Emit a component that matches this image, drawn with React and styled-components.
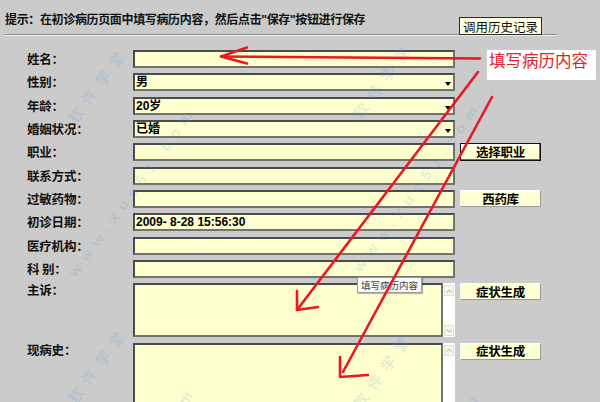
import React from "react";
import styled, { createGlobalStyle, css } from "styled-components";

const Global = createGlobalStyle`
  html, body { margin: 0; padding: 0; background: #cbcbcb; }
  body { font-family: "Liberation Sans", "Noto Sans CJK SC", sans-serif; }
`;

const Page = styled.div`
  position: relative;
  width: 600px;
  height: 402px;
  overflow: hidden;
  background: #cbcbcb;
  color: #000;
  font-family: "Liberation Sans", "Noto Sans CJK SC", sans-serif;
`;

const Header = styled.div`
  display: flex;
  align-items: flex-end;
  justify-content: space-between;
  height: 34px;
  margin: 0 43px 0 5px;
  border-bottom: 1px solid #8e8e8e;
  box-shadow: 0 1px 0 #ededed;
`;

const Hint = styled.div`
  font-weight: 700;
  font-size: 12px;
  line-height: 16px;
  letter-spacing: -0.35px;
  padding-bottom: 6px;
  color: #111;
`;

const HistoryButton = styled.button`
  box-sizing: border-box;
  width: 83px;
  height: 18px;
  margin: 0 15px -1px 0;
  padding: 0;
  background: #ffffe0;
  border: 1px solid #2a2a2a;
  font: 400 12.5px/15px "Noto Sans CJK SC", sans-serif;
  color: #111;
`;

const Form = styled.div`
  display: flex;
  flex-direction: column;
  gap: 5.33px;
  margin: 15px 0 0 27px;
`;

const Row = styled.div`
  display: grid;
  grid-template-columns: 101px 322px 81px;
  column-gap: 5px;
  height: ${(p) => p.$h}px;
  align-items: ${(p) => (p.$tall ? "start" : "center")};
`;

const Label = styled.div`
  font: 700 12.5px/14px "Noto Sans CJK SC", sans-serif;
  letter-spacing: -0.2px;
  color: #111;
  white-space: pre;
  padding-top: ${(p) => (p.$tall ? "0px" : "0")};
`;

const fieldBorder = css`
  box-sizing: border-box;
  background: #fffecf;
  border: 2px solid;
  border-color: #4c4c4c #727272 #727272 #4c4c4c;
`;

const Field = styled.div`
  ${fieldBorder};
  height: 18px;
  display: flex;
  align-items: center;
  padding-left: 1px;
`;

const Value = styled.span`
  flex: 1;
  font: 700 12px/14px "Liberation Sans", "Noto Sans CJK SC", sans-serif;
  color: #000;
  white-space: pre;
`;

const DropArrow = styled.span`
  align-self: stretch;
  width: 11px;
  display: flex;
  align-items: flex-end;
  justify-content: center;
  padding-bottom: 3px;
  box-sizing: border-box;
  border-left: 1px solid #fffff2;
  &::after {
    content: "";
    border-left: 3px solid transparent;
    border-right: 3px solid transparent;
    border-top: 4px solid #000;
  }
`;

const ActionButton = styled.button`
  box-sizing: border-box;
  align-self: ${(p) => (p.$top ? "start" : "center")};
  width: 81px;
  height: ${(p) => (p.$focused ? 18 : 17)}px;
  padding: 0;
  background: #ffffd4;
  font: 700 12.5px/14px "Noto Sans CJK SC", sans-serif;
  letter-spacing: -0.3px;
  color: #000;
  border: 1px solid;
  border-color: #fffff4 #9c9c9c #9c9c9c #fffff4;
  ${(p) =>
    p.$focused &&
    css`
      border: 1px solid #111;
      box-shadow: inset -1px -1px 0 #6a6a6a, inset 1px 1px 0 #ffffff;
    `}
`;

const TextBox = styled.div`
  display: flex;
  height: 100%;
`;

const Area = styled.div`
  ${fieldBorder};
  flex: 1;
`;

const ScrollStrip = styled.div`
  width: 12px;
  background: #ffffff;
  display: flex;
  flex-direction: column;
  justify-content: space-between;
  align-items: center;
  padding: 2px 0 1px;
  box-sizing: border-box;
`;

const ScrollBtn = styled.div`
  box-sizing: border-box;
  width: 10px;
  height: 11px;
  background: #f6f6ea;
  border: 1px solid #e2e2d2;
  display: flex;
  align-items: center;
  justify-content: center;
`;

const Overlay = styled.svg`
  position: absolute;
  left: 0;
  top: 0;
  pointer-events: none;
`;

const Note = styled.div`
  position: absolute;
  left: 487px;
  top: 50px;
  width: 109px;
  height: 30px;
  background: #ffffff;
  box-sizing: border-box;
  padding-left: 2px;
  font: 400 16.5px/20px "Noto Sans CJK SC", sans-serif;
  color: #e2222c;
  white-space: nowrap;
`;

const Tooltip = styled.div`
  position: absolute;
  left: 357px;
  top: 277px;
  width: 65px;
  height: 16px;
  box-sizing: border-box;
  background: #fafafa;
  border: 1px solid #9a9a9a;
  box-shadow: 1px 1px 1px rgba(0, 0, 0, 0.25);
  font: 400 9.5px/14px "Noto Sans CJK SC", sans-serif;
  color: #444;
  text-align: center;
  white-space: nowrap;
`;

const Watermark = styled.div`
  position: absolute;
  left: 0;
  top: 0;
  width: 600px;
  height: 402px;
  pointer-events: none;
`;

const MarkText = styled.span`
  position: absolute;
  transform-origin: 0 50%;
  transform: rotate(-54deg);
  white-space: nowrap;
  color: rgba(70, 140, 215, 0.16);
  font: 700 ${(p) => p.$size}px/20px "Liberation Sans", "Noto Sans CJK SC", sans-serif;
  letter-spacing: ${(p) => p.$spacing}px;
`;

const rows = [
  { label: "姓名：" },
  { label: "性别：", select: true, value: "男" },
  { label: "年龄：", select: true, value: "20岁" },
  { label: "婚姻状况：", select: true, value: "已婚" },
  { label: "职业：", button: "选择职业", focused: true },
  { label: "联系方式：" },
  { label: "过敏药物：", button: "西药库" },
  { label: "初诊日期：", value: "2009- 8-28 15:56:30" },
  { label: "医疗机构：" },
  { label: "科 别：" },
];

const Chevron = ({ up }) => (
  <svg width="6" height="4" viewBox="0 0 6 4">
    <polyline
      points={up ? "0.5,3.5 3,1 5.5,3.5" : "0.5,0.5 3,3 5.5,0.5"}
      fill="none"
      stroke="#c9c9b2"
      strokeWidth="1.2"
    />
  </svg>
);

const tiles = [
  [0, 0],
  [285, -5],
  [0, 280],
  [285, 285],
];

export default function App() {
  return (
    <Page>
      <Global />
      <Header>
        <Hint>提示：在初诊病历页面中填写病历内容，然后点击"保存"按钮进行保存</Hint>
        <HistoryButton>调用历史记录</HistoryButton>
      </Header>
      <Form>
        {rows.map((r) => (
          <Row key={r.label} $h={18}>
            <Label>{r.label}</Label>
            <Field>
              <Value>{r.value || ""}</Value>
              {r.select && <DropArrow />}
            </Field>
            {r.button ? (
              <ActionButton $focused={r.focused}>{r.button}</ActionButton>
            ) : (
              <span />
            )}
          </Row>
        ))}
        <Row $h={54} $tall>
          <Label $tall>主诉：</Label>
          <TextBox>
            <Area />
            <ScrollStrip>
              <ScrollBtn>
                <Chevron up />
              </ScrollBtn>
              <ScrollBtn>
                <Chevron />
              </ScrollBtn>
            </ScrollStrip>
          </TextBox>
          <ActionButton $top>症状生成</ActionButton>
        </Row>
        <Row $h={80} $tall>
          <Label $tall>现病史：</Label>
          <TextBox>
            <Area />
            <ScrollStrip>
              <ScrollBtn>
                <Chevron up />
              </ScrollBtn>
            </ScrollStrip>
          </TextBox>
          <ActionButton $top>症状生成</ActionButton>
        </Row>
      </Form>

      <Watermark>
        {tiles.map(([dx, dy], i) => (
          <React.Fragment key={i}>
            <MarkText $size={15} $spacing={8} style={{ left: 72 + dx, top: 112 + dy }}>
              软件学堂
            </MarkText>
            <MarkText $size={15} $spacing={7} style={{ left: 72 + dx, top: 265 + dy }}>
              www.xue51.com
            </MarkText>
          </React.Fragment>
        ))}
      </Watermark>

      <Note>填写病历内容</Note>
      <Tooltip>填写病历内容</Tooltip>

      <Overlay width="600" height="402" viewBox="0 0 600 402">
        <g fill="none" stroke="#ea1820" strokeWidth="2.6" strokeLinecap="round" strokeLinejoin="round">
          <path d="M480 58.5 L221 56.5" />
          <path d="M247 47.5 L221 56.5 L247 63.5" />
          <path d="M478 72 L297 310" />
          <path d="M297 291 L297 310 L318 307" />
          <path d="M492 97 L343 372" />
          <path d="M340 357 L340 377 L368 375" />
        </g>
      </Overlay>
    </Page>
  );
}
